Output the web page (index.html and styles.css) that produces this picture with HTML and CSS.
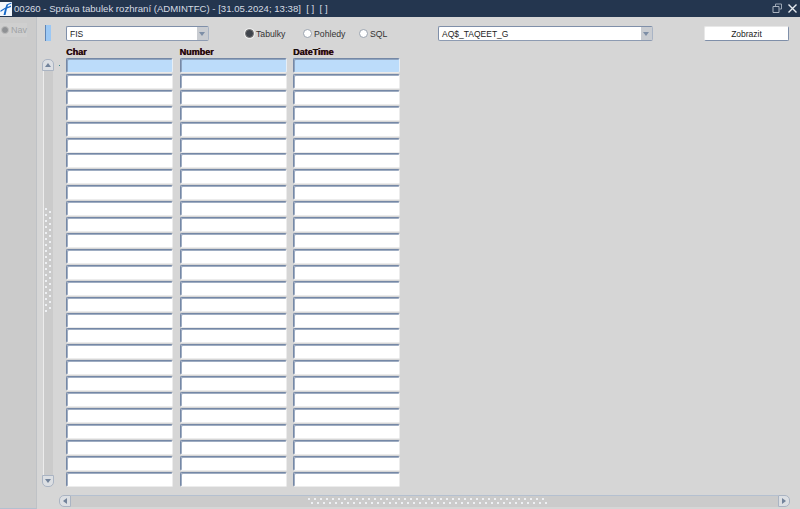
FILE: index.html
```
<!DOCTYPE html>
<html lang="cs">
<head>
<meta charset="utf-8">
<title>00260 - Správa tabulek rozhraní</title>
<link rel="stylesheet" href="styles.css">
</head>
<body>
<div class="app">
  <header class="titlebar">
    <svg class="logo" width="12" height="14" viewBox="0 0 12 14"><rect width="12" height="14" fill="#f4f8fd"/><path d="M0.5 10 L5 7 L3.5 13 L5.5 13 L7 6.5 L11 5 L11 3.5 L7.5 5 L8 3 L11.5 1.5 L11.5 0.5 L6.5 2.5 L5.5 5.5 L0.5 8.5Z" fill="#1668c8"/></svg>
    <span class="title-text">00260 - Správa tabulek rozhraní (ADMINTFC) - [31.05.2024; 13:38]&nbsp; [ ]&nbsp; [ ]</span>
    <span class="win-btns">
      <svg width="11" height="11" viewBox="0 0 11 11"><path d="M3.5 3V1h6v5H7.5" fill="none" stroke="#9aa5b4"/><path d="M1 3.5h6v6H1z" fill="none" stroke="#aab3bf"/></svg>
      <svg width="11" height="11" viewBox="0 0 11 11"><path d="M1.5 1.5l8 8M9.5 1.5l-8 8" stroke="#e6eaf0" stroke-width="1.4"/></svg>
    </span>
  </header>
  <div class="workspace">
    <nav class="nav">
      <div class="nav-item"><span class="nav-dot"></span>Nav</div>
    </nav>
    <main class="main">
      <div class="toolbar">
        <span class="indicator"></span>
        <div class="combo combo-a"><span class="combo-text">FIS</span><span class="combo-btn"></span></div>
        <div class="radios">
          <label class="radio radio-on">Tabulky</label>
          <label class="radio radio-b">Pohledy</label>
          <label class="radio radio-c">SQL</label>
        </div>
        <div class="combo combo-b"><span class="combo-text">AQ$_TAQEET_G</span><span class="combo-btn"></span></div>
        <button class="btn">Zobrazit</button>
      </div>
      <div class="heads">
        <span class="head">Char</span>
        <span class="head">Number</span>
        <span class="head">DateTime</span>
      </div>
      <div class="table">
        <div class="vscroll">
          <span class="vbtn vbtn-up"></span>
          <span class="vtrack"><span class="vgrip"></span></span>
          <span class="vbtn vbtn-down"></span>
        </div>
        <span class="marker"></span>
        <div class="grid" id="grid"></div>
      </div>
      <div class="hscroll">
        <span class="hbtn hbtn-l"></span>
        <span class="htrack"><span class="hgrip"></span></span>
        <span class="hbtn hbtn-r"></span>
      </div>
    </main>
  </div>
</div>
<script src="app.js"></script>
</body>
</html>
```
FILE: app.js
```
var g = document.getElementById('grid');
for (var r = 0; r < 27; r++) {
  for (var c = 0; c < 3; c++) {
    var d = document.createElement('div');
    d.className = r === 0 ? 'cell cell-active' : 'cell';
    g.appendChild(d);
  }
}
```
FILE: styles.css
```
* { box-sizing: border-box; }
html, body { margin: 0; padding: 0; }
body { width: 800px; height: 509px; overflow: hidden; background: #d6d6d6; font-family: "Liberation Sans", Arial, sans-serif; }
.app { width: 800px; height: 509px; display: flex; flex-direction: column; }

.titlebar { height: 17px; flex: none; background: #24364f; color: #d5dbe3; display: flex; align-items: center; font-size: 9.6px; white-space: nowrap; }
.logo { flex: none; margin-right: 2px; }
.title-text { flex: 1; }
.win-btns { display: flex; gap: 4px; padding-right: 2px; align-items: center; }

.workspace { flex: 1; display: flex; min-height: 0; }
.nav { width: 37px; flex: none; background: #cbcbcb; border-right: 1px solid #bfc2c6; border-bottom: 1px solid #b4c0d0; padding-top: 6px; }
.nav-item { height: 14px; display: flex; align-items: center; gap: 2px; font-size: 9px; color: #a0a3a6; padding-left: 1px; background: #cfcfcf; width: 27px; }
.nav-dot { width: 8px; height: 8px; border-radius: 50%; background: #8f9194; border: 1px solid #bdbdbd; flex: none; }

.main { flex: 1; min-width: 0; display: flex; flex-direction: column; padding-left: 5px; }

.toolbar { height: 29px; flex: none; padding-top: 9px; display: flex; align-items: flex-start; }
.indicator { width: 6px; height: 16px; margin: -1px 0 0 3px; background: #9cc8f4; border-left: 1px solid #5f85b5; flex: none; }
.combo { height: 15px; display: flex; background: #fff; border: 1px solid #7f8fa9; border-radius: 2px; border-right-color: #a9b4c5; border-bottom-color: #8d9bb2; flex: none; font-size: 8.5px; color: #222; align-items: stretch; }
.combo-a { width: 143px; margin-left: 15px; }
.combo-b { width: 215px; }
.combo-text { flex: 1; padding: 2px 0 0 3px; line-height: 11px; }
.combo-btn { width: 11px; background: #c9ccd1; position: relative; }
.combo-btn::after { content: ""; position: absolute; left: 2px; top: 5px; border-left: 3.5px solid transparent; border-right: 3.5px solid transparent; border-top: 4px solid #7d8ea6; }

.radios { display: flex; flex: none; width: 193px; margin-left: 36px; font-size: 8.7px; color: #333; }
.radio { display: flex; align-items: center; height: 15px; }
.radio::before { content: ""; width: 7px; height: 7px; border-radius: 50%; background: #fff; border: 1px solid #9aa3af; margin-right: 2px; flex: none; }
.radio-on::before { background: #3f444c; box-shadow: 0 0 0 1px #eee; border-color: #777; }
.radio-on { width: 58px; }
.radio-b { width: 56px; }
.btn { width: 85px; height: 15px; margin: 0 0 0 51px; padding: 0; background: #fff; border: 1px solid #e8e8e8; border-right-color: #7f8fa9; border-bottom-color: #7f8fa9; border-radius: 2px; font: 8.5px "Liberation Sans", Arial, sans-serif; color: #222; flex: none; }

.heads { height: 12px; flex: none; display: grid; grid-template-columns: repeat(3, 107px); column-gap: 6.5px; padding-left: 24px; }
.head { font-size: 9px; line-height: 12px; font-weight: bold; color: #111; text-shadow: 0.6px 0 0 #7a0010; }

.table { height: 430px; flex: none; display: flex; align-items: flex-start; }
.vscroll { width: 12px; height: 429px; display: flex; flex-direction: column; flex: none; }
.vbtn { height: 12px; flex: none; background: #dcdfe3; border: 1px solid #aab4c3; position: relative; }
.vbtn-up { border-radius: 5px 5px 0 0; margin-top: 1px; }
.vbtn-down { border-radius: 0 0 5px 5px; }
.vbtn::after { content: ""; position: absolute; left: 1.5px; border-left: 3.5px solid transparent; border-right: 3.5px solid transparent; }
.vbtn-up::after { top: 3px; border-bottom: 4px solid #72839b; }
.vbtn-down::after { top: 3px; border-top: 4px solid #72839b; }
.vtrack { flex: 1; margin: 0 1px; background: #cbcbcb; border-left: 1px solid #ececec; display: flex; align-items: flex-start; }
.vgrip { width: 7px; height: 104px; margin: 137px 0 0 1px; background-image: radial-gradient(circle at 1px 1px, #eef0f3 1px, transparent 1.3px), radial-gradient(circle at 5px 4px, #eef0f3 1px, transparent 1.3px); background-size: 8px 6px; }
.marker { width: 1px; height: 1px; margin: 7px 6px 0 5px; background: #3a8a8a; flex: none; }
.grid { display: grid; grid-template-columns: repeat(3, 107px); column-gap: 6.5px; grid-auto-rows: 15.92px; }
.cell { height: 15px; background: #fff; border: 1px solid #ececec; border-top: 1px solid #7588a6; border-left: 1px solid #7588a6; box-shadow: inset 1px 1px 0 #9fadc2; border-radius: 2px; }
.cell-active { background: #bcdcfa; border-right-color: #e6eef6; box-shadow: inset 1px 1px 0 #8ea4c0; }

.hscroll { height: 12px; flex: none; margin: 7px 0 0 17px; display: flex; width: 731px; }
.hbtn { width: 12px; flex: none; background: #dcdfe3; border: 1px solid #aab4c3; position: relative; }
.hbtn-l { border-radius: 5px 0 0 5px; }
.hbtn-r { border-radius: 0 5px 5px 0; }
.hbtn::after { content: ""; position: absolute; top: 1.5px; border-top: 3.5px solid transparent; border-bottom: 3.5px solid transparent; }
.hbtn-l::after { left: 3px; border-right: 4px solid #72839b; }
.hbtn-r::after { left: 3px; border-left: 4px solid #72839b; }
.htrack { flex: 1; background: #cbcbcb; border-top: 1px solid #b4c0d0; display: flex; align-items: flex-start; }
.hgrip { width: 240px; height: 7px; margin: 2px 0 0 237px; background-image: radial-gradient(circle at 1px 1px, #eef0f3 1px, transparent 1.3px), radial-gradient(circle at 4px 5px, #eef0f3 1px, transparent 1.3px); background-size: 6px 8px; }
```
